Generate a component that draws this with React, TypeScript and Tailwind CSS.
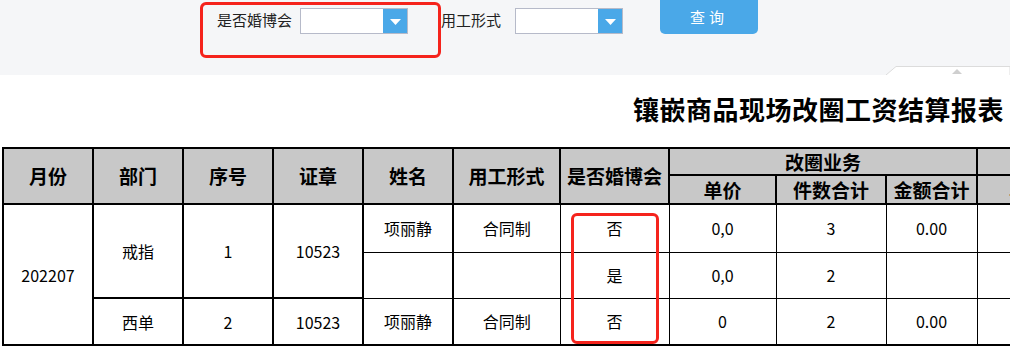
import * as React from "react";

const font = { fontFamily: "'Noto Sans CJK SC', 'Noto Sans', sans-serif" };

const Select = () => (
  <div className="flex h-[26px] w-[108px] border border-[#b6bac9] bg-white">
    <div className="flex-1" />
    <div className="flex w-[24px] items-center justify-center bg-[#4aa8e8] pt-[2px]">
      <svg width="11" height="6" viewBox="0 0 11 6">
        <path d="M0 0 L11 0 L5.5 6 Z" fill="#fff" />
      </svg>
    </div>
  </div>
);

const th = "border-2 border-black bg-[#c8c8c8] text-[19px] font-bold text-black text-center whitespace-nowrap overflow-hidden";
const tdL = "border-2 border-black text-[16px] text-center";
const tdR = "border border-black text-[16px] text-center";

export default function App() {
  return (
    <div style={font} className="relative h-[354px] w-[1010px] overflow-hidden bg-white text-black">
      {/* filter bar */}
      <div className="relative h-[75px] bg-[#f5f6f8]">
        <div className="flex items-start">
          <span className="ml-[217px] mt-[9px] text-[15px] leading-[22px] text-[#222]">是否婚博会</span>
          <div className="ml-[8px] mt-[8px]">
            <Select />
          </div>
          <span className="ml-[33px] mt-[9px] text-[15px] leading-[22px] text-[#222]">用工形式</span>
          <div className="ml-[14px] mt-[8px]">
            <Select />
          </div>
          <button className="ml-[37px] h-[34px] w-[98px] rounded-b-[5px] bg-[#4aa8e8] text-[15px] tracking-[4px] text-white">
            查询
          </button>
        </div>
        {/* highlight around the 是否婚博会 filter */}
        <div className="absolute left-[200px] top-[2px] h-[56px] w-[241px] rounded-[6px] border-[3px] border-[#f5231c]" />
        {/* collapse tab */}
        <div className="absolute bottom-0 right-0 h-[9px] w-[124px]">
          <svg width="124" height="9" viewBox="0 0 124 9" className="block">
            <path d="M0 9 L10 0.5 L124 0.5 L124 9" fill="#fff" stroke="#dcdcdc" />
            <path d="M66 8 L71 3 L76 8 Z" fill="#cfcfcf" />
          </svg>
        </div>
      </div>

      {/* title */}
      <div className="h-[72px] pl-[633px] pt-[16px]">
        <h1 className="whitespace-nowrap text-[26px] font-bold leading-[36px] tracking-[0.5px]">
          镶嵌商品现场改圈工资结算报表
        </h1>
      </div>

      {/* report table */}
      <table className="ml-[2px] table-fixed border-collapse border-2 border-black" style={{ width: 1194 }}>
        <colgroup>
          <col style={{ width: 90 }} />
          <col style={{ width: 90 }} />
          <col style={{ width: 90 }} />
          <col style={{ width: 90 }} />
          <col style={{ width: 90 }} />
          <col style={{ width: 107 }} />
          <col style={{ width: 109 }} />
          <col style={{ width: 107 }} />
          <col style={{ width: 110 }} />
          <col style={{ width: 91 }} />
          <col style={{ width: 110 }} />
          <col style={{ width: 110 }} />
        </colgroup>
        <thead>
          <tr className="h-[27px]">
            <th rowSpan={2} className={th}>月份</th>
            <th rowSpan={2} className={th}>部门</th>
            <th rowSpan={2} className={th}>序号</th>
            <th rowSpan={2} className={th}>证章</th>
            <th rowSpan={2} className={th}>姓名</th>
            <th rowSpan={2} className={th}>用工形式</th>
            <th rowSpan={2} className={th}>是否婚博会</th>
            <th colSpan={3} className={`${th} leading-[24px]`}>改圈业务</th>
            <th colSpan={2} className={`${th} leading-[24px]`}>修理业务</th>
          </tr>
          <tr className="h-[29px]">
            <th className={`${th} leading-[26px]`}>单价</th>
            <th className={`${th} leading-[26px]`}>件数合计</th>
            <th className={`${th} leading-[26px]`}>金额合计</th>
            <th className={`${th} leading-[26px] text-left pl-[31px]`}>单价</th>
            <th className={`${th} leading-[26px]`}>件数</th>
          </tr>
        </thead>
        <tbody>
          <tr className="h-[48px]">
            <td rowSpan={3} className={tdL}>202207</td>
            <td rowSpan={2} className={tdL}>戒指</td>
            <td rowSpan={2} className={tdL}>1</td>
            <td rowSpan={2} className={tdL}>10523</td>
            <td className={`${tdL} border-y text-[15px]`}>项丽静</td>
            <td className={`${tdR} text-[15px]`}>合同制</td>
            <td className={tdR}>否</td>
            <td className={tdR}>0,0</td>
            <td className={tdR}>3</td>
            <td className={tdR}>0.00</td>
            <td className={tdR} />
            <td className={tdR} />
          </tr>
          <tr className="h-[46px]">
            <td className={`${tdL} border-y`} />
            <td className={tdR} />
            <td className={tdR}>是</td>
            <td className={tdR}>0,0</td>
            <td className={tdR}>2</td>
            <td className={tdR} />
            <td className={tdR} />
            <td className={tdR} />
          </tr>
          <tr className="h-[47px]">
            <td className={`${tdL} border-t`}>西单</td>
            <td className={`${tdL} border-t`}>2</td>
            <td className={`${tdL} border-t`}>10523</td>
            <td className={`${tdL} border-t text-[15px]`}>项丽静</td>
            <td className={`${tdR} text-[15px]`}>合同制</td>
            <td className={tdR}>否</td>
            <td className={tdR}>0</td>
            <td className={tdR}>2</td>
            <td className={tdR}>0.00</td>
            <td className={tdR} />
            <td className={tdR} />
          </tr>
        </tbody>
      </table>

      {/* highlight around the 是否婚博会 column */}
      <div className="absolute left-[571px] top-[213px] h-[131px] w-[88px] rounded-[6px] border-[3px] border-[#f5231c]" />
    </div>
  );
}
